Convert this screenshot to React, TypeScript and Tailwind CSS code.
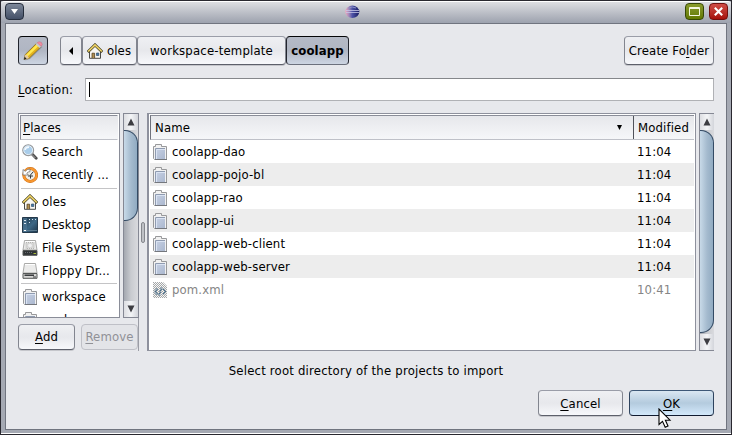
import React from "react";

const raised =
  "flex items-center justify-center rounded-[4px] border border-t-[#9a9da8] border-x-[#82858f] border-b-[#5d606b] bg-gradient-to-b from-[#eff0f3] via-[#e7e8ec] to-[#f7f8fb] shadow-[0_1px_0_#c5c6cb]";
const pressed =
  "flex items-center justify-center rounded-[4px] border border-t-[#050608] border-x-[#22252e] border-b-[#6c707c] bg-gradient-to-b from-[#b5bac6] via-[#b0b6c3] to-[#cdd5e2]";

function U({ children }: { children: React.ReactNode }) {
  return <span className="underline decoration-1 underline-offset-2">{children}</span>;
}

function Pencil() {
  return (
    <svg width="20" height="20" viewBox="0 0 20 20">
      <path d="M2 19.5 L7 18 L19.5 6 L18 5 L6 17Z" fill="#737985" opacity=".5" />
      <path d="M1 18.5 L2.2 13.6 L13.3 2.6 L17.3 6.4 L6 17.4Z" fill="#e3b21f" stroke="#77601d" strokeWidth=".7" />
      <path d="M2.9 14 L13.4 3.5 L15.2 5.2 L4.6 15.6Z" fill="#ffe84f" />
      <path d="M1 18.5 L2.2 13.8 L4 14 L5 15.6 L6 17.3Z" fill="#e5cba2" />
      <path d="M.8 18.8 L1.6 15.8 L3.6 17.8Z" fill="#222" />
      <path d="M12.6 3.2 L14.3 1.6 L18.3 5.2 L16.6 7Z" fill="#c8cbd0" />
      <path d="M14.1 1.8 Q16 -.3 18.4 1.4 Q20.2 3.4 18.2 5.4Z" fill="#ee8ca0" stroke="#b5687a" strokeWidth=".4" />
    </svg>
  );
}

function Home() {
  return (
    <svg width="16" height="16" viewBox="0 0 16 16">
      <path d="M2.5 8 L8 3 L13.5 8 V15.3 H2.5Z" fill="#f8f7f2" stroke="#4a4a46" />
      <path d="M.7 9 L8 1.9 L15.3 9" fill="none" stroke="#3f3b1c" strokeWidth="2.9" />
      <path d="M1.2 8.5 L8 1.9 L14.8 8.5" fill="none" stroke="#f0d468" strokeWidth="1.7" />
      <path d="M5 15 V10.2 H7.6 V15" fill="#b08f52" stroke="#554425" strokeWidth=".8" />
      <path d="M9.5 10 H11.8 V12.5 H9.5Z" fill="#4279aa" stroke="#35516d" strokeWidth=".7" />
    </svg>
  );
}

function Search() {
  return (
    <svg width="16" height="16" viewBox="0 0 16 16">
      <path d="M10.3 10.3 L14.2 14.2" stroke="#4b4b4b" strokeWidth="2.8" strokeLinecap="round" />
      <path d="M10 10.5 L13.4 14" stroke="#a8a8a8" strokeWidth="1" />
      <circle cx="6.2" cy="6.2" r="5.4" fill="#a9cdea" stroke="#97999b" strokeWidth="1.2" />
      <circle cx="6.2" cy="6.2" r="4.4" fill="none" stroke="#e5eef5" />
      <path d="M3.2 6 Q3.2 3.2 7 3.2" stroke="#f2f9ff" strokeWidth="1.8" fill="none" />
    </svg>
  );
}

function Recent() {
  return (
    <svg width="16" height="16" viewBox="0 0 16 16">
      <circle cx="8.2" cy="8" r="6.4" fill="#efefea" stroke="#c96a14" strokeWidth="3" />
      <circle cx="8.2" cy="8" r="6.4" fill="none" stroke="#f7972f" strokeWidth="2.2" />
      <path d="M8 8.5 L11.3 4.7 M6 9 H11 M8.5 8.5 V11.5" stroke="#34383b" strokeWidth="1" />
      <path d="M1 2.5 V8 H6.3 L4.8 6.2 Q6 4.8 8 4.6 V2 Q5 2 3.2 4.3Z" fill="#fff" stroke="#666" strokeWidth=".7" />
    </svg>
  );
}

function DesktopIcon() {
  return (
    <svg width="16" height="16" viewBox="0 0 16 16">
      <defs>
        <linearGradient id="desk" x2="1" y2="1">
          <stop stopColor="#1d3446" />
          <stop offset=".55" stopColor="#3c6785" />
          <stop offset="1" stopColor="#1c3549" />
        </linearGradient>
      </defs>
      <path d="M.5 .5 H15.5 V15.5 H.5Z" fill="url(#desk)" stroke="#24394a" />
      <path d="M1 1 H5 V15 H1Z" fill="#4f7896" opacity=".7" />
      <path d="M2 3.5 H4 M2 6.5 H4 M7 2.5 H8 M10 2.5 H11 M13 2.5 H14 M7 5.5 H8" stroke="#dce7ed" />
      <path d="M1 13.5 H15" stroke="#5d7b90" />
      <path d="M2 13.5 H4" stroke="#fff" />
    </svg>
  );
}

function Drive({ chip }: { chip?: boolean }) {
  return (
    <svg width="16" height="16" viewBox="0 0 16 16">
      <path d="M2.5 .5 H13.5 L15 10 H1Z" fill="#ebebea" stroke="#aaaaa8" />
      <path d="M3 1.5 H13" stroke="#fff" />
      <path d="M1 10.5 H15 V15.3 H1Z" fill={chip ? "#303436" : "#d6d6d4"} stroke="#555857" />
      {chip ? (
        <>
          <path d="M4 2.5 H12 V8.5 H4Z" fill="#d9d9d7" stroke="#b4b4b2" strokeDasharray="1 1" />
          <circle cx="8" cy="5.5" r="2.3" fill="#f0f0f0" stroke="#c5c5c5" strokeWidth=".5" />
          <path d="M3 12.5 H10" stroke="#686c70" strokeDasharray="1 1" />
          <path d="M11.5 13.5 H14" stroke="#a7bb35" />
        </>
      ) : (
        <>
          <path d="M2.5 12.2 H12" stroke="#282b2d" strokeWidth="1.4" />
          <path d="M11 14 H14" stroke="#3c3f40" />
        </>
      )}
    </svg>
  );
}

function Folder() {
  return (
    <svg width="16" height="16" viewBox="-1 0 16 16" className="shrink-0">
      <defs>
        <linearGradient id="fold" x2="1" y2="1">
          <stop stopColor="#c6d0e3" />
          <stop offset="1" stopColor="#abb8cf" />
        </linearGradient>
      </defs>
      <path d="M.5 14.5 V2.5 H2.5 V.5 H8.5 V2.5 H13.5 V15.5 H1.5Z" fill="#f1f1f1" stroke="#98999b" />
      <path d="M3 5 H12 V15 H3Z" fill="url(#fold)" />
      <path d="M2.5 15 V4.5 H12" fill="none" stroke="#8f9bb0" />
      <path d="M3.5 15 V5.5 H12" fill="none" stroke="#dbe4f3" />
      <path d="M2 15.5 H14" stroke="#74777d" />
    </svg>
  );
}

function XmlFile() {
  return (
    <svg width="16" height="16" viewBox="-1 0 16 16" className="shrink-0">
      <defs>
        <pattern id="chk" width="2" height="2" patternUnits="userSpaceOnUse">
          <path d="M0 0H1V1H0ZM1 1H2V2H1Z" fill="#a4a7a8" />
        </pattern>
      </defs>
      <path d="M0 0 H10 L14 4 V16 H0Z" fill="#f8f8f8" />
      <path d="M4.5 6.5 L2 9.5 L4.5 12.5 M10 6.5 L12.5 9.5 L10 12.5 M8.6 5.5 L6 13.5" stroke="#3d6c90" strokeWidth="1.8" fill="none" />
      <path d="M0 0 H10 L14 4 V16 H0Z" fill="url(#chk)" />
    </svg>
  );
}

function Scrollbar({ side }: { side: "places" | "files" }) {
  const files = side === "files";
  return (
    <div className={"flex shrink-0 flex-col border-l border-[#858894] bg-[#c7c9ce] " + (files ? "h-[238px] w-[15px]" : "h-[205px] w-[16px] border-r")}>
      <div className="flex h-[17px] shrink-0 items-center justify-center border-t border-[#858894] bg-gradient-to-r from-[#dddee2] via-[#f4f5f7] to-[#d3d5db]">
        <svg width="8" height="8" viewBox="0 0 8 8"><path d="M4 .5 L7.5 7.5 H.5Z" fill="#3d3d42" /></svg>
      </div>
      <div className="flex min-h-0 flex-1 flex-col bg-gradient-to-r from-[#a4a8b0] via-[#c9cbd0] to-[#d9dade]">
        <div className={"rounded-r-[13px] border-y border-r border-[#344b65] bg-gradient-to-r from-[#c5d7e6] from-5% via-[#a4bace] via-55% to-[#91abc2] " + (files ? "h-[203px]" : "h-[91px]")} />
      </div>
      <div className="flex h-[17px] shrink-0 items-center justify-center border-b border-[#858894] bg-gradient-to-r from-[#dddee2] via-[#f4f5f7] to-[#d3d5db]">
        <svg width="8" height="8" viewBox="0 0 8 8"><path d="M4 7.5 L7.5 .5 H.5Z" fill="#3d3d42" /></svg>
      </div>
    </div>
  );
}

function Place({ icon, label }: { icon: React.ReactNode; label: string }) {
  return (
    <div className="flex h-[23px] shrink-0 items-center gap-[4px] pl-[2px]">
      {icon}
      <span>{label}</span>
    </div>
  );
}

const files = ["coolapp-dao", "coolapp-pojo-bl", "coolapp-rao", "coolapp-ui", "coolapp-web-client", "coolapp-web-server"];

export default function App() {
  return (
    <div className="relative flex h-[435px] w-[732px] flex-col overflow-hidden border border-[#29282f] bg-[#a5a9b3] font-['DejaVu_Sans_Condensed','DejaVu_Sans',sans-serif] text-[13px] leading-[16px] tracking-[0.13px] whitespace-nowrap text-black">
      <div className="flex h-[22px] shrink-0 items-start justify-between rounded-t-[3px] border-t border-white bg-gradient-to-b from-[#dddee2] to-[#9da2ae] pr-[3px] pl-[4px]">
        <div className="mt-px flex h-[17px] w-[57px]">
          <div className="flex h-[17px] w-[19px] items-center justify-center rounded-[4px] border border-[#262e3d] bg-gradient-to-b from-[#7d8799] to-[#445067]">
            <svg width="7" height="5" viewBox="0 0 7 5"><path d="M0 0H7L3.5 5Z" fill="white" /></svg>
          </div>
        </div>
        <svg width="16" height="14" viewBox="0 0 16 14" className="mt-[3px] mr-[44px]">
          <defs>
            <linearGradient id="ecl">
              <stop stopColor="#efa9bf" />
              <stop offset=".25" stopColor="#a58abb" />
              <stop offset=".5" stopColor="#4d53a6" />
              <stop offset="1" stopColor="#171a61" />
            </linearGradient>
          </defs>
          <ellipse cx="8.3" cy="6.8" rx="7" ry="6.2" fill="url(#ecl)" />
          <path d="M2 5.5 H15 M2 7.5 H15" stroke="#c8c8e8" strokeWidth=".8" />
          <path d="M4.5 3.2 Q8 .8 12 3" stroke="#8a91c9" fill="none" />
        </svg>
        <div className="mt-px flex gap-[5px]">
          <div className="flex h-[17px] w-[19px] items-center justify-center rounded-[4px] border border-[#364706] bg-gradient-to-b from-[#8a9c2c] to-[#637900]">
            <svg width="11" height="9" viewBox="0 0 11 9"><path d="M.5 .5H10.5V8.5H.5Z M0 1.5H11" fill="none" stroke="#f4f6df" /></svg>
          </div>
          <div className="flex h-[17px] w-[19px] items-center justify-center rounded-[4px] border border-[#71100e] bg-gradient-to-b from-[#cf4b45] to-[#a60e09]">
            <svg width="9" height="9" viewBox="0 0 9 9"><path d="M.8 .8L8.2 8.2M8.2 .8L.8 8.2" stroke="white" strokeWidth="2.1" /></svg>
          </div>
        </div>
      </div>

      <div className="mx-[4px] flex h-[407px] shrink-0 flex-col border border-[#70747f] bg-[#e7e8ec] px-[12px] pt-[12px]">
        <div className="flex h-[29px] shrink-0">
          <div className={"w-[30px] " + pressed}><Pencil /></div>
          <div className={"ml-[12px] w-[22px] " + raised}>
            <svg width="4" height="8" viewBox="0 0 4 8"><path d="M4 0V8L0 4Z" fill="black" /></svg>
          </div>
          <div className={"w-[55px] gap-[4px] pr-[1px] " + raised}><Home /><span>oles</span></div>
          <div className={"w-[149px] tracking-[0.18px] " + raised}>workspace-template</div>
          <div className={"w-[63px] font-bold " + pressed}>coolapp</div>
          <div className={"ml-auto w-[90px] " + raised}><span>Create Fo<U>l</U>der</span></div>
        </div>

        <div className="mt-[13px] flex h-[23px] shrink-0 items-center">
          <span className="w-[67px] tracking-[0.2px]"><U>L</U>ocation:</span>
          <div className="flex h-[23px] flex-1 items-center border border-[#b0b1b5] border-t-[#85878b] bg-white pl-[3px]">
            <div className="h-[15px] w-px bg-black" />
          </div>
        </div>

        <div className="mt-[12px] flex h-[238px] shrink-0">
          <div className="flex w-[121px] shrink-0 flex-col border-r border-[#9b9da6]">
            <div className="flex h-[205px] gap-[3px]">
              <div className="flex h-[205px] w-[102px] shrink-0 flex-col overflow-hidden border border-[#8a8d98] bg-white p-px">
                <div className="flex h-[25px] shrink-0 items-center border border-t-[#8a8d98] border-r-transparent border-b-[#bfc1c8] border-l-[#8a8d98] bg-gradient-to-b from-[#e6e7eb] to-[#f6f7f9] pl-[2px]"><span><U>P</U>laces</span></div>
                <Place icon={<Search />} label="Search" />
                <Place icon={<Recent />} label="Recently ..." />
                <div className="mx-px mt-[2px] mb-[1px] h-px shrink-0 bg-[#c4c4c6]" />
                <Place icon={<Home />} label="oles" />
                <Place icon={<DesktopIcon />} label="Desktop" />
                <Place icon={<Drive chip />} label="File System" />
                <Place icon={<Drive />} label="Floppy Dr..." />
                <div className="mx-px my-[1px] h-px shrink-0 bg-[#c4c4c6]" />
                <Place icon={<Folder />} label="workspace" />
                <Place icon={<Folder />} label="work" />
              </div>
              <Scrollbar side="places" />
            </div>
            <div className="mt-[6px] flex h-[26px] gap-[6px]">
              <div className={"w-[57px] " + raised}><span><U>A</U>dd</span></div>
              <div className="flex w-[57px] items-center justify-center rounded-[4px] border border-[#bfc0c7] bg-[#e3e4e8] text-[#909197]"><span><U>R</U>emove</span></div>
            </div>
          </div>
          <div className="ml-[2px] flex w-[4px] items-center"><div className="h-[21px] w-[4px] rounded-[2px] border border-[#85878d] bg-[#bfc1c6]" /></div>
          <div className="ml-[2px] flex w-[549px] shrink-0 flex-col border border-l-2 border-[#8e919d] bg-white p-px pl-[1px]">
            <div className="flex h-[25px] shrink-0 border-t border-b border-l border-t-[#8a8d98] border-b-[#bfc1c8] border-l-[#6f727c] bg-gradient-to-b from-[#e6e7eb] to-[#f6f7f9]">
              <div className="flex flex-1 items-center justify-between pr-[11px] pl-[4px]">
                <span>Name</span>
                <svg width="5" height="5" viewBox="0 0 5 5"><path d="M0 0H5L2.5 5Z" fill="black" /></svg>
              </div>
              <div className="flex w-[61px] items-center border-l border-[#50525a] pl-[4px]">Modified</div>
            </div>
            {files.map((name, i) => (
              <div key={name} className={"flex h-[23px] shrink-0 items-center pl-[2px] " + (i % 2 ? "bg-[#ededed]" : "bg-white")}>
                <Folder />
                <span className="ml-[4px] flex-1">{name}</span>
                <span className="w-[57px]">11:04</span>
              </div>
            ))}
            <div className="flex h-[23px] shrink-0 items-center pl-[2px] text-[#858585]">
              <XmlFile />
              <span className="ml-[4px] flex-1">pom.xml</span>
              <span className="w-[57px]">10:41</span>
            </div>
          </div>
          <div className="ml-[3px]"><Scrollbar side="files" /></div>
        </div>

        <div className="mt-[12px] text-center tracking-[0.2px]">Select root directory of the projects to import</div>
        <div className="mt-[11px] flex h-[26px] shrink-0 justify-end gap-[6px]">
          <div className={"w-[85px] pt-px " + raised}><span><U>C</U>ancel</span></div>
          <div className="flex w-[85px] items-center justify-center rounded-[4px] border border-t-[#3e5877] border-x-[#2e435e] border-b-[#111b30] bg-gradient-to-b from-[#dae7f2] via-[#b4cbde] to-[#d3e9fb] pt-px"><span><U>O</U>K</span></div>
        </div>
      </div>
      <div className="mt-[3px] h-px shrink-0 bg-white" />

      <svg width="14" height="21" viewBox="0 0 14 21" className="absolute top-[407px] left-[657px]">
        <path d="M1 1 V16.5 L4.5 13.3 L7.2 19.2 L10 18 L7.4 12.2 H12Z" fill="white" stroke="black" strokeWidth="1.1" />
      </svg>
    </div>
  );
}
